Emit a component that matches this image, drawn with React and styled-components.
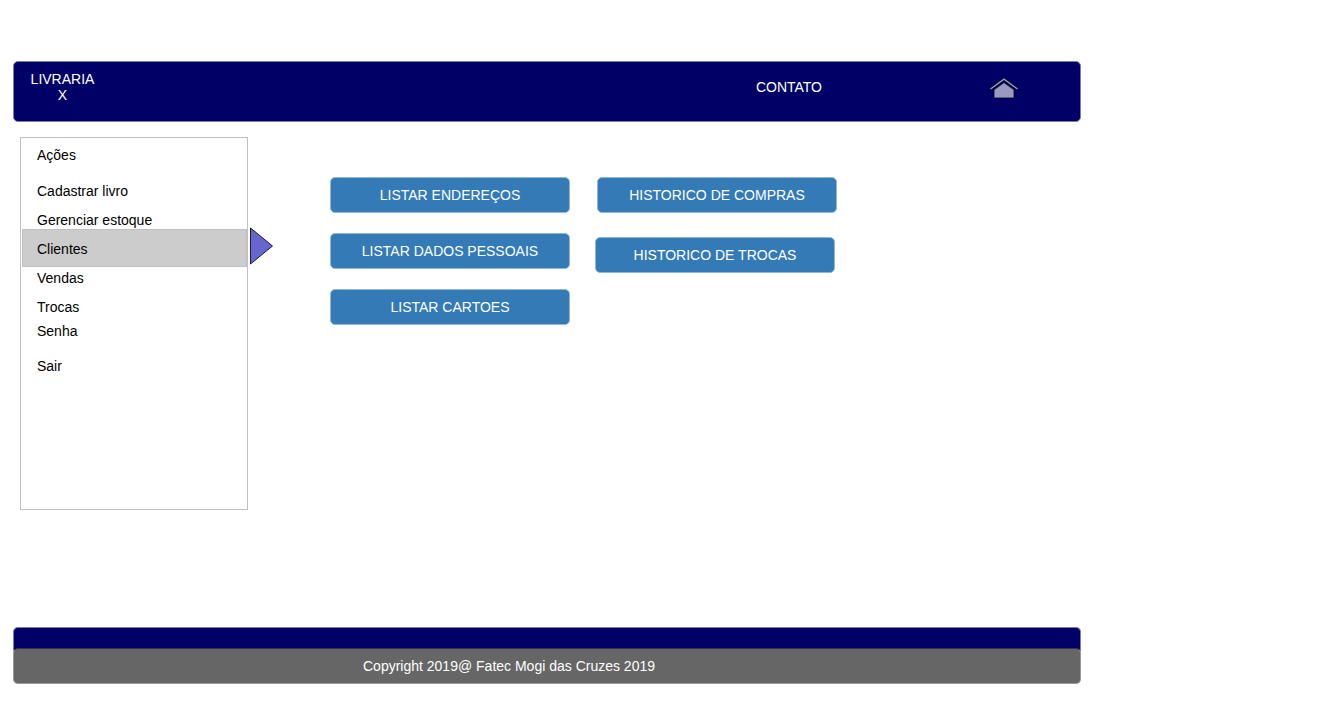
import React from 'react';
import styled, { createGlobalStyle } from 'styled-components';

const GlobalStyle = createGlobalStyle`
  * { box-sizing: border-box; }
  body {
    margin: 0;
    background: #fff;
    font-family: "Liberation Sans", Arial, sans-serif;
    font-size: 14px;
    line-height: 16px;
    color: #000;
  }
  a { color: inherit; text-decoration: none; }
`;

const Page = styled.div`
  max-width: 1094px;
  padding: 61px 13px 37px;
`;

const Header = styled.header`
  display: flex;
  align-items: flex-start;
  min-height: 61px;
  padding: 9px 61px 9px 16px;
  border: 1px solid #7f7fa6;
  border-radius: 5px;
  background: #000066;
  color: #fff;
`;

const Brand = styled.a`
  width: 65px;
  text-align: center;
`;

const TopNav = styled.nav`
  display: flex;
  align-items: flex-start;
  gap: 167px;
  margin-left: auto;
  padding-top: 6px;
`;

const NavLink = styled.a`
  line-height: 20px;
`;

const IconLink = styled.a`
  display: flex;
`;

const Body = styled.div`
  display: flex;
  align-items: flex-start;
  padding: 15px 7px 117px;
`;

const Menu = styled.nav`
  display: flex;
  flex-direction: column;
  width: 228px;
  min-height: 373px;
  padding: 9px 0 9px 1px;
  border: 1px solid #c0c0c0;
`;

const MenuTitle = styled.h2`
  margin: 0;
  padding-left: 15px;
  font-size: inherit;
  font-weight: 400;
`;

const MenuItem = styled.a`
  margin-top: ${(p) => p.$space}px;
  padding: ${(p) => (p.$active ? '11px 0 9px 14px' : '0 0 0 15px')};
  border: ${(p) => (p.$active ? '1px solid #c0c0c0' : '0')};
  background: ${(p) => (p.$active ? '#cccccc' : 'transparent')};
`;

const Pointer = styled.svg`
  flex: none;
  margin: 90px 0 0 1px;
`;

const Actions = styled.main`
  display: flex;
  align-items: flex-start;
  gap: 25px;
  padding: 40px 0 0 56px;
`;

const ActionColumn = styled.div`
  display: flex;
  flex-direction: column;
  gap: ${(p) => p.$gap}px;
  width: ${(p) => p.$width}px;
`;

const ActionButton = styled.button`
  align-self: ${(p) => p.$align || 'flex-start'};
  width: 240px;
  height: 36px;
  padding: 0;
  border: 1px solid #92b8d8;
  border-radius: 5px;
  background: #337ab7;
  color: #fff;
  font: inherit;
  cursor: pointer;
`;

const FooterBand = styled.div`
  height: 24px;
  border: 1px solid #7f7fa6;
  border-bottom: 0;
  border-radius: 5px 5px 0 0;
  background: #000066;
`;

const FooterText = styled.p`
  margin: -3px 0 0;
  padding: 9px 76px 9px 0;
  border: 1px solid #999999;
  border-top-color: #33334d;
  border-radius: 5px;
  background: #666666;
  color: #fff;
  text-align: center;
`;

const menuItems = [
  { label: 'Cadastrar livro', space: 20 },
  { label: 'Gerenciar estoque', space: 13 },
  { label: 'Clientes', space: 1, active: true },
  { label: 'Vendas', space: 3 },
  { label: 'Trocas', space: 13 },
  { label: 'Senha', space: 8 },
  { label: 'Sair', space: 19 },
];

function HomeIcon() {
  return (
    <svg width="30" height="22" viewBox="0 0 30 22" aria-hidden="true">
      <path d="M1.500 12 L15 2.200 L28.500 12" fill="none" stroke="#00002a" strokeWidth="3" />
      <path d="M1.500 12 L15 2.200 L28.500 12" fill="none" stroke="#9999bf" strokeWidth="1.500" />
      <path d="M5 21 V12.800 L15 5.500 L25 12.800 V21 Z" fill="#9999c2" stroke="#000022" strokeWidth="0.800" />
    </svg>
  );
}

export default function App() {
  return (
    <>
      <GlobalStyle />
      <Page>
        <Header>
          <Brand href="#">LIVRARIA X</Brand>
          <TopNav>
            <NavLink href="#contato">CONTATO</NavLink>
            <IconLink href="#inicio" aria-label="Início">
              <HomeIcon />
            </IconLink>
          </TopNav>
        </Header>
        <Body>
          <Menu aria-label="Ações">
            <MenuTitle>Ações</MenuTitle>
            {menuItems.map((item) => (
              <MenuItem
                key={item.label}
                href="#"
                $space={item.space}
                $active={item.active}
                aria-current={item.active ? 'page' : undefined}
              >
                {item.label}
              </MenuItem>
            ))}
          </Menu>
          <Pointer width="25" height="38" viewBox="0 0 25 38" aria-hidden="true">
            <path d="M1.500 1 L23.500 19 L1.500 37 Z" fill="#6666cc" stroke="#1a1a40" />
          </Pointer>
          <Actions>
            <ActionColumn $gap={20} $width={240}>
              <ActionButton type="button">LISTAR ENDEREÇOS</ActionButton>
              <ActionButton type="button">LISTAR DADOS PESSOAIS</ActionButton>
              <ActionButton type="button">LISTAR CARTOES</ActionButton>
            </ActionColumn>
            <ActionColumn $gap={24} $width={242}>
              <ActionButton type="button" $align="flex-end">HISTORICO DE COMPRAS</ActionButton>
              <ActionButton type="button">HISTORICO DE TROCAS</ActionButton>
            </ActionColumn>
          </Actions>
        </Body>
        <footer>
          <FooterBand />
          <FooterText>Copyright 2019@ Fatec Mogi das Cruzes 2019</FooterText>
        </footer>
      </Page>
    </>
  );
}
